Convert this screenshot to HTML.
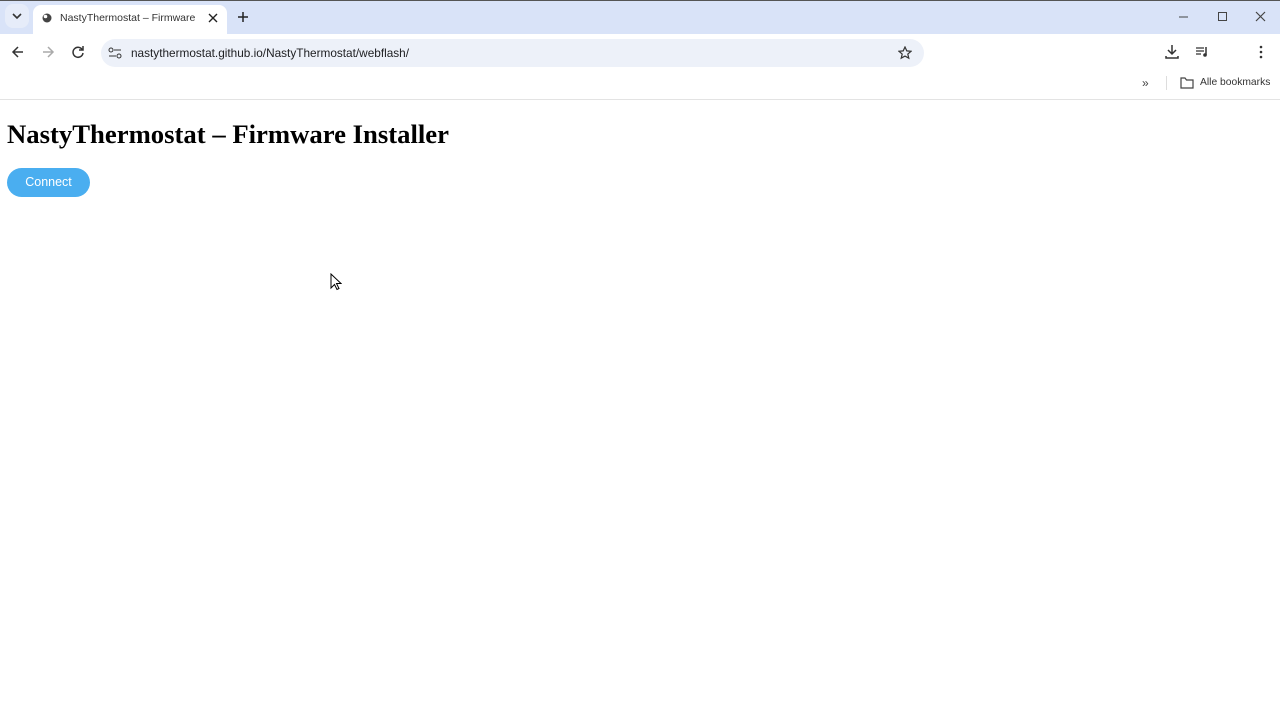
<!DOCTYPE html>
<html><head><meta charset="utf-8"><style>
*{box-sizing:border-box;margin:0;padding:0}
body{width:1280px;height:720px;overflow:hidden;background:#fff;font-family:"Liberation Sans",sans-serif;position:relative}
.top{position:absolute;left:0;top:0;width:1280px;height:34px;background:#d9e3f8;border-top:1px solid #555}
.tab{position:absolute;left:33px;top:4px;width:194px;height:30px;background:#fff;border-radius:8px 8px 0 0}
.ab{position:absolute;left:0;top:34px;width:1280px;height:66px;background:#fff;border-bottom:1px solid #e3e3e3}
.url{position:absolute;left:101px;top:5px;width:823px;height:28px;background:#edf1f9;border-radius:14px}
.t{position:absolute;font-size:12px;color:#1f1f1f;white-space:nowrap}
svg{position:absolute}
h1{position:absolute;left:7px;top:119px;font-family:"Liberation Serif",serif;font-size:26.7px;font-weight:bold;color:#000;white-space:nowrap}
.btn{position:absolute;left:7px;top:168px;width:83px;height:29px;background:#4aaef0;border-radius:15px;color:#fff;font-size:12.5px;text-align:center;line-height:29px}
</style></head><body>
<div class="top">
 <div style="position:absolute;left:5px;top:3px;width:24px;height:24px;background:#e6ecf9;border-radius:8px"></div>
 <svg style="left:11px;top:11px" width="12" height="8"><path d="M2 2l4 4 4-4" stroke="#333" stroke-width="1.6" fill="none"/></svg>
 <div class="tab">
  <svg style="left:8px;top:7px" width="12" height="12"><circle cx="6" cy="6" r="4.5" fill="#444"/><circle cx="4.5" cy="4.5" r="1.8" fill="#fff"/></svg>
  <div class="t" style="left:27px;top:7px;font-size:10.5px;color:#333;width:139px;overflow:hidden">NastyThermostat – Firmware Installer</div>
  <svg style="left:175px;top:8px" width="10" height="10"><path d="M1 1l8 8M9 1l-8 8" stroke="#222" stroke-width="1.4"/></svg>
 </div>
 <svg style="left:237px;top:10px" width="12" height="12"><path d="M6 1v10M1 6h10" stroke="#222" stroke-width="1.5"/></svg>
 <svg style="left:1178px;top:12px" width="12" height="8"><path d="M1 4h9" stroke="#444"/></svg>
 <svg style="left:1217px;top:10px" width="12" height="12"><rect x="1.5" y="1.5" width="8" height="8" fill="none" stroke="#444"/></svg>
 <svg style="left:1255px;top:10px" width="12" height="12"><path d="M1 1l9 9M10 1l-9 9" stroke="#444" stroke-width="1.2"/></svg>
</div>
<div class="ab">
 <svg style="left:11px;top:11px" width="14" height="14"><path d="M12 7H2M7 2L2 7l5 5" stroke="#333" stroke-width="1.5" fill="none"/></svg>
 <svg style="left:41px;top:11px" width="14" height="14"><path d="M2 7h10M7 2l5 5-5 5" stroke="#aaa" stroke-width="1.5" fill="none"/></svg>
 <svg style="left:71px;top:11px" width="14" height="14"><path d="M11.5 5A5 5 0 1 0 12 8" stroke="#333" stroke-width="1.5" fill="none"/><path d="M12 1v4H8" stroke="#333" stroke-width="1.5" fill="none"/></svg>
 <div class="url">
  <svg style="left:7px;top:8px" width="14" height="12"><circle cx="3" cy="3" r="2" fill="none" stroke="#333"/><path d="M6 3h7M1 9h7" stroke="#333"/><circle cx="11" cy="9" r="2" fill="none" stroke="#333"/></svg>
  <div class="t" style="left:30px;top:7px;font-size:11.8px;color:#202124">nastythermostat.github.io/NastyThermostat/webflash/</div>
  <svg style="left:797px;top:7px" width="14" height="14"><path d="M7 1l1.8 3.9 4.2.4-3.2 2.8 1 4.1L7 10.1 3.2 12.2l1-4.1L1 5.3l4.2-.4z" fill="none" stroke="#333" stroke-width="1.2"/></svg>
 </div>
 <svg style="left:1164px;top:10px" width="16" height="16"><path d="M8 1v9M4 6l4 4 4-4M2 12v2h12v-2" stroke="#333" stroke-width="1.5" fill="none"/></svg>
 <svg style="left:1195px;top:11px" width="16" height="14"><path d="M1 3h8M1 6h8M1 9h5" stroke="#333" stroke-width="1.3"/><path d="M11 2v8" stroke="#333" stroke-width="1.5"/><circle cx="10" cy="10" r="1.8" fill="#333"/></svg>
 <svg style="left:1259px;top:10px" width="4" height="16"><circle cx="2" cy="3" r="1.3" fill="#333"/><circle cx="2" cy="8" r="1.3" fill="#333"/><circle cx="2" cy="13" r="1.3" fill="#333"/></svg>
 <div class="t" style="left:1142px;top:42px;font-size:12px;color:#444">»</div>
 <div style="position:absolute;left:1166px;top:42px;width:1px;height:14px;background:#ddd"></div>
 <svg style="left:1180px;top:43px" width="14" height="12"><path d="M1 1h4l1.5 2H13v8H1z" fill="none" stroke="#444" stroke-width="1.2"/></svg>
 <div class="t" style="left:1200px;top:43px;font-size:10.3px;color:#333">Alle bookmarks</div>
</div>
<h1>NastyThermostat – Firmware Installer</h1>
<div class="btn">Connect</div>
<svg style="left:330px;top:273px" width="12" height="18"><path d="M1 1v14l3.5-3.5 2.5 5 2-1-2.5-5H11z" fill="#fff" stroke="#000" stroke-width="1"/></svg>
</body></html>
